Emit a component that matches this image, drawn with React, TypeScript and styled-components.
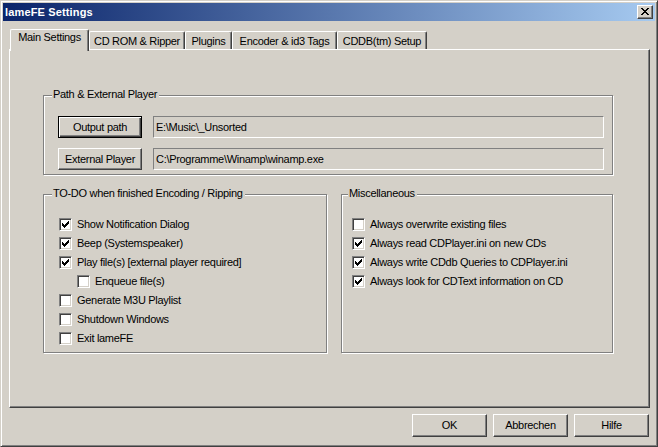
import React from "react";
import styled, { createGlobalStyle } from "styled-components";

const FACE = "#d4d0c8";

const Global = createGlobalStyle`
  html, body { margin: 0; padding: 0; background: ${FACE}; }
  body { font-family: "Liberation Sans", Arial, sans-serif; font-size: 11px; }
  * { box-sizing: border-box; }
`;

const Window = styled.div`
  width: 658px;
  height: 447px;
  background: ${FACE};
  border: 1px solid;
  border-color: ${FACE} #404040 #404040 ${FACE};
  box-shadow: inset 1px 1px 0 #fff, inset -1px -1px 0 #808080;
  padding: 2px;
  display: flex;
  flex-direction: column;
  color: #000;
  letter-spacing: -0.3px;
`;

const TitleBar = styled.div`
  flex: none;
  height: 18px;
  background: linear-gradient(to right, #0a246a, #a6caf0);
  display: flex;
  align-items: center;
  justify-content: space-between;
  padding: 0 2px 0 2px;
`;

const TitleText = styled.span`
  color: #fff;
  font-weight: bold;
  font-size: 11px;
  letter-spacing: 0.15px;
  line-height: 13px;
`;

const CaptionButton = styled.div`
  width: 16px;
  height: 14px;
  background: ${FACE};
  border: 1px solid;
  border-color: #fff #404040 #404040 #fff;
  box-shadow: inset -1px -1px 0 #808080;
  display: flex;
  align-items: center;
  justify-content: center;
  padding-bottom: 1px;
`;

const Body = styled.div`
  flex: 1;
  display: flex;
  flex-direction: column;
  padding: 8px 5px 0 6px;
`;

const TabRow = styled.div`
  display: flex;
  align-items: flex-end;
  height: 20px;
  padding-left: 1px;
`;

const Tab = styled.div<{ $w: number; $active?: boolean }>`
  width: ${(p) => p.$w}px;
  height: ${(p) => (p.$active ? 22 : 18)}px;
  margin-bottom: ${(p) => (p.$active ? -2 : 0)}px;
  position: relative;
  z-index: ${(p) => (p.$active ? 1 : 0)};
  background: ${FACE};
  border-top: 1px solid #fff;
  border-left: 1px solid #fff;
  border-right: 1px solid #404040;
  box-shadow: inset -1px 0 0 #808080;
  border-radius: 2px 2px 0 0;
  display: flex;
  justify-content: center;
  padding-top: ${(p) => (p.$active ? 1 : 3)}px;
  line-height: 13px;
  white-space: nowrap;
`;

const Panel = styled.div`
  height: 359px;
  border: 1px solid;
  border-color: #fff #404040 #404040 #fff;
  box-shadow: inset -1px -1px 0 #808080;
  padding: 45px 0 0 33px;
`;

const Content = styled.div`
  width: 570px;
  display: flex;
  flex-direction: column;
  gap: 19px;
`;

const Group = styled.div<{ $h: number }>`
  position: relative;
  height: ${(p) => p.$h}px;
  border: 1px solid #808080;
  box-shadow: inset 1px 1px 0 #fff, 1px 1px 0 #fff;
`;

const Legend = styled.span<{ $x: number }>`
  position: absolute;
  top: -8px;
  left: ${(p) => p.$x}px;
  padding: 0 2px 0 1px;
  background: ${FACE};
  line-height: 13px;
  white-space: nowrap;
`;

const PathGroup = styled(Group)`
  display: flex;
  flex-direction: column;
  gap: 10px;
  padding: 20px 8px 4px 14px;
`;

const PathRow = styled.div`
  display: flex;
  align-items: center;
  gap: 11px;
`;

const Button = styled.div<{ $w: number; $default?: boolean }>`
  flex: none;
  width: ${(p) => p.$w}px;
  height: ${(p) => (p.$default ? 22 : 22)}px;
  background: ${FACE};
  border: 1px solid;
  border-color: ${(p) => (p.$default ? "#000" : "#fff #404040 #404040 #fff")};
  box-shadow: ${(p) =>
    p.$default
      ? "inset 1px 1px 0 #fff, inset -1px -1px 0 #404040, inset -2px -2px 0 #808080"
      : "inset -1px -1px 0 #808080"};
  display: flex;
  align-items: center;
  justify-content: center;
  line-height: 13px;
  white-space: nowrap;
`;

const Field = styled.div`
  width: 451px;
  height: 22px;
  border: 1px solid;
  border-color: #808080 #fff #fff #808080;
  background: ${FACE};
  display: flex;
  align-items: center;
  padding-left: 2px;
  line-height: 13px;
  white-space: nowrap;
`;

const Columns = styled.div`
  display: flex;
  gap: 14px;
`;

const CheckGroup = styled(Group)<{ $w: number; $pl: number }>`
  width: ${(p) => p.$w}px;
  padding: 20px 0 0 ${(p) => p.$pl}px;
  display: flex;
  flex-direction: column;
`;

const CheckRow = styled.div<{ $indent?: boolean }>`
  height: 19px;
  display: flex;
  align-items: center;
  gap: 5px;
  padding-left: ${(p) => (p.$indent ? 18 : 0)}px;
  line-height: 13px;
  white-space: nowrap;
`;

const Box = styled.span`
  flex: none;
  width: 13px;
  height: 13px;
  background: #fff;
  border: 1px solid;
  border-color: #808080 #fff #fff #808080;
  box-shadow: inset 1px 1px 0 #404040, inset -1px -1px 0 ${FACE};
  display: flex;
  align-items: center;
  justify-content: center;
`;

const Footer = styled.div`
  display: flex;
  justify-content: flex-end;
  gap: 6px;
  margin-top: 6px;
  padding-right: 1px;
`;

const FooterButton = styled(Button)`
  height: 23px;
`;

const checkPixels: [number, number][] = [
  [6, 0],
  [5, 1], [6, 1],
  [0, 2], [4, 2], [5, 2], [6, 2],
  [0, 3], [1, 3], [3, 3], [4, 3], [5, 3],
  [0, 4], [1, 4], [2, 4], [3, 4], [4, 4],
  [1, 5], [2, 5], [3, 5],
  [2, 6],
];

const CheckMark = () => (
  <svg width="7" height="7" viewBox="0 0 7 7" shapeRendering="crispEdges">
    {checkPixels.map(([x, y]) => (
      <rect key={`${x}-${y}`} x={x} y={y} width="1" height="1" fill="#000" />
    ))}
  </svg>
);

const closePixels: [number, number][] = [
  [0, 0], [1, 0], [6, 0], [7, 0],
  [1, 1], [2, 1], [5, 1], [6, 1],
  [2, 2], [3, 2], [4, 2], [5, 2],
  [3, 3], [4, 3],
  [2, 4], [3, 4], [4, 4], [5, 4],
  [1, 5], [2, 5], [5, 5], [6, 5],
  [0, 6], [1, 6], [6, 6], [7, 6],
];

const CloseGlyph = () => (
  <svg width="8" height="7" viewBox="0 0 8 7" shapeRendering="crispEdges">
    {closePixels.map(([x, y]) => (
      <rect key={`${x}-${y}`} x={x} y={y} width="1" height="1" fill="#000" />
    ))}
  </svg>
);

const Check = ({ label, checked, indent }: { label: string; checked?: boolean; indent?: boolean }) => (
  <CheckRow $indent={indent}>
    <Box>{checked && <CheckMark />}</Box>
    <span>{label}</span>
  </CheckRow>
);

const tabs = [
  { label: "Main Settings", w: 79, active: true },
  { label: "CD ROM & Ripper", w: 96 },
  { label: "Plugins", w: 47 },
  { label: "Encoder & id3 Tags", w: 105 },
  { label: "CDDB(tm) Setup", w: 90 },
];

export default function App() {
  return (
    <>
      <Global />
      <Window>
        <TitleBar>
          <TitleText>lameFE Settings</TitleText>
          <CaptionButton>
            <CloseGlyph />
          </CaptionButton>
        </TitleBar>
        <Body>
          <TabRow>
            {tabs.map((t) => (
              <Tab key={t.label} $w={t.w} $active={t.active}>
                {t.label}
              </Tab>
            ))}
          </TabRow>
          <Panel>
            <Content>
              <PathGroup $h={80}>
                <Legend $x={8}>Path &amp; External Player</Legend>
                <PathRow>
                  <Button $w={84} $default>
                    Output path
                  </Button>
                  <Field>E:\Music\_Unsorted</Field>
                </PathRow>
                <PathRow>
                  <Button $w={84}>External Player</Button>
                  <Field>C:\Programme\Winamp\winamp.exe</Field>
                </PathRow>
              </PathGroup>
              <Columns>
                <CheckGroup $h={159} $w={284} $pl={15}>
                  <Legend $x={8}>TO-DO when finished Encoding / Ripping</Legend>
                  <Check label="Show Notification Dialog" checked />
                  <Check label="Beep (Systemspeaker)" checked />
                  <Check label="Play file(s) [external player required]" checked />
                  <Check label="Enqueue file(s)" indent />
                  <Check label="Generate M3U Playlist" />
                  <Check label="Shutdown Windows" />
                  <Check label="Exit lameFE" />
                </CheckGroup>
                <CheckGroup $h={159} $w={272} $pl={10}>
                  <Legend $x={6}>Miscellaneous</Legend>
                  <Check label="Always overwrite existing files" />
                  <Check label="Always read CDPlayer.ini on new CDs" checked />
                  <Check label="Always write CDdb Queries to CDPlayer.ini" checked />
                  <Check label="Always look for CDText information on CD" checked />
                </CheckGroup>
              </Columns>
            </Content>
          </Panel>
          <Footer>
            <FooterButton $w={75}>OK</FooterButton>
            <FooterButton $w={75}>Abbrechen</FooterButton>
            <FooterButton $w={75}>Hilfe</FooterButton>
          </Footer>
        </Body>
      </Window>
    </>
  );
}
